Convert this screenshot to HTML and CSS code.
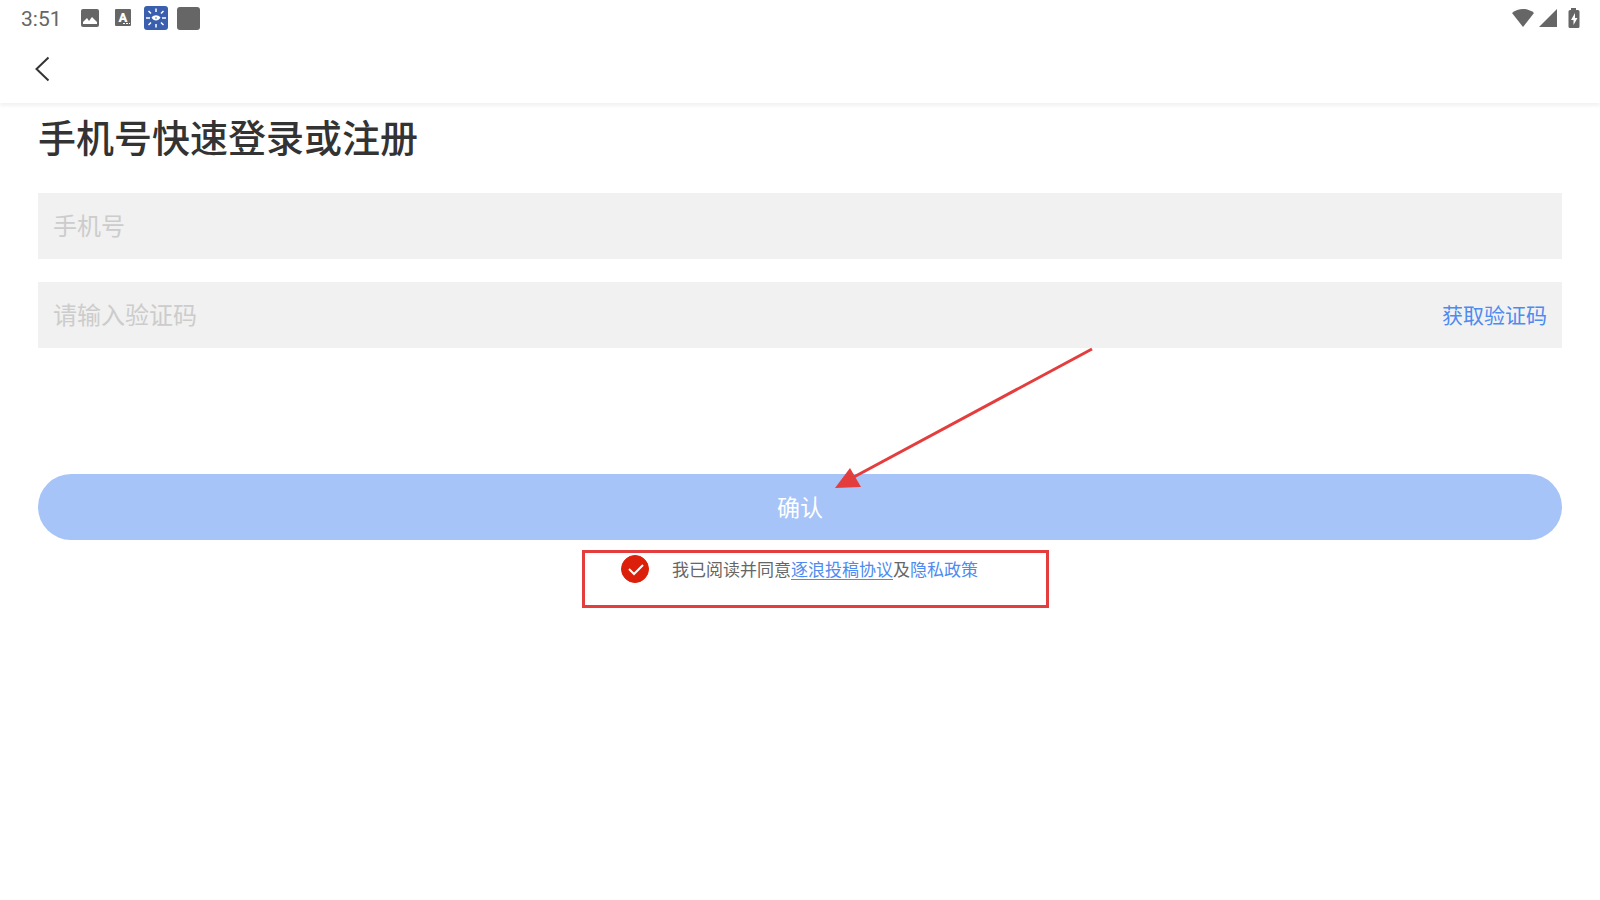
FILE: index.html
```html
<!DOCTYPE html>
<html lang="zh-CN">
<head>
    <meta charset="UTF-8">
    <meta name="viewport" content="width=device-width, initial-scale=1.0">
    <title>手机号快速登录或注册</title>
    <link rel="stylesheet" href="styles.css">
</head>
<body>

<div class="status-bar">
    <div class="status-left">
        <span class="clock">3:51</span>
        <svg class="status-icon" viewBox="0 0 24 24">
            <rect x="3" y="3" width="18" height="18" rx="2" fill="#666"/>
            <path d="M5 18v-2l4-4 2 3 3-4 5 5v2z" fill="#fff"/>
        </svg>
        <svg class="status-icon" viewBox="0 0 24 24">
            <rect x="4" y="3" width="16" height="17" rx="1" fill="#666"/>
            <text x="12" y="16" class="icon-letter">A</text>
            <path d="M12 17h2v1h-2zM15 17h2v1h-2zM18 17h1v1h-1z" fill="#fff"/>
        </svg>
        <svg class="status-icon" viewBox="0 0 24 24">
            <rect width="24" height="24" rx="3" fill="#3a5fae"/>
            <path d="M12 2.5V6M12 18v3.500M2 12h4M18 12h4M4.500 5L7 7.500M17 16.500l2.500 2.500M4.500 19L7 16.500M17 7.500L19.500 5" stroke="#fff" stroke-width="1.5"/>
            <path d="M7.500 11.500c2.500-3 6.500-3 9 0-2 4-7 4-9 0z" fill="#fff"/>
            <circle cx="12" cy="12" r="1" fill="#8fa6d4"/>
        </svg>
        <span class="app-block"></span>
    </div>
    <div class="status-right">
        <svg width="24" height="20" viewBox="0 0 24 20">
            <path d="M1 5C7.500-.3 16.500-.3 23 5L12 19z" fill="#666"/>
        </svg>
        <svg width="20" height="20" viewBox="0 0 20 20">
            <path d="M19 1v18H1z" fill="#666"/>
        </svg>
        <svg class="battery" width="12" height="20" viewBox="0 0 12 20">
            <path d="M3 0h5v2h2q1.500 0 1.500 1.500v15q0 1.500-1.500 1.500H2q-1.500 0-1.500-1.500v-15Q.5 2 2 2h1z" fill="#666"/>
            <path d="M7 5l-4 7h2.500v5L9.500 10H7z" fill="#fff"/>
        </svg>
    </div>
</div>

<header class="nav-bar">
    <button type="button" class="back" aria-label="返回">
        <svg width="16" height="26" viewBox="0 0 16 26">
            <path d="M14.500 1.500L2.500 13l12 11.500" fill="none" stroke="#333" stroke-width="2"/>
        </svg>
    </button>
</header>

<main class="container">
    <h1>手机号快速登录或注册</h1>
    <form id="login-form">
        <div class="form-group">
            <input type="tel" id="phone" name="phone" placeholder="手机号" aria-label="手机号">
        </div>
        <div class="form-group">
            <input type="text" id="code" name="code" placeholder="请输入验证码" aria-label="请输入验证码">
            <button type="button" class="get-code">获取验证码</button>
        </div>
        <div class="confirm">
            <button type="submit" class="submit">确认</button>
            <svg class="arrow" width="260" height="142" viewBox="0 0 260 142">
                <path d="M258 2L18 131" stroke="#e43d3d" stroke-width="3"/>
                <path d="M1 141l15-20 11 19z" fill="#e43d3d"/>
            </svg>
        </div>
        <div class="agreement">
            <input type="checkbox" id="agree" name="agree" checked>
            <p><label for="agree">我已阅读并同意</label><a href="#" class="underlined">逐浪投稿协议</a>及<a href="#">隐私政策</a></p>
            <span class="highlight"></span>
        </div>
    </form>
</main>

</body>
</html>
```

FILE: styles.css
```css
* {
    box-sizing: border-box;
}
body {
    font-family: Roboto, 'Noto Sans CJK SC', sans-serif;
    background: #fff;
    color: #333;
    margin: 0;
    min-height: 100vh;
}
button {
    background: none;
    border: none;
    padding: 0;
    font-family: inherit;
    cursor: pointer;
}
svg {
    display: block;
}

/* Status bar */
.status-bar {
    display: flex;
    justify-content: space-between;
    align-items: center;
    height: 36px;
    padding: 0 20px 0 21px;
}
.status-left,
.status-right {
    display: flex;
    align-items: center;
}
.status-left {
    gap: 9px;
}
.clock {
    color: #666;
    font-size: 21px;
    line-height: 24px;
    padding-top: 2px;
    margin-right: 7px;
}
.status-icon {
    width: 24px;
    height: 24px;
}
.icon-letter {
    font-size: 13px;
    font-weight: 900;
    fill: #fff;
    text-anchor: middle;
}
.app-block {
    width: 23px;
    height: 23px;
    border-radius: 3px;
    background: #666;
}
.status-right {
    gap: 3px;
}
.battery {
    margin-left: 7px;
}

/* Header */
.nav-bar {
    display: flex;
    align-items: center;
    height: 67px;
    padding: 0 34px 2px;
    box-shadow: 0 3px 3px rgba(0, 0, 0, 0.05);
}

/* Login form */
.container {
    padding: 8px 38px;
}
h1 {
    margin: 0 0 26px;
    font-size: 38px;
    font-weight: 500;
    line-height: 56px;
}
.form-group {
    display: flex;
    align-items: center;
    height: 66px;
    margin-bottom: 23px;
    padding: 0 15px;
    background: #f1f1f1;
}
.form-group input {
    flex: 1;
    min-width: 0;
    height: 100%;
    padding: 2px 0 0;
    border: none;
    outline: none;
    background: transparent;
    color: #333;
    font-family: inherit;
    font-size: 24px;
}
.form-group input::placeholder {
    color: #ccc;
}
.get-code {
    padding-bottom: 2px;
    color: #4d8bf0;
    font-size: 21px;
}
.confirm {
    position: relative;
    margin-top: 126px;
}
.submit {
    display: block;
    width: 100%;
    height: 66px;
    padding-bottom: 2px;
    border-radius: 33px;
    background: #a6c4f7;
    color: #fff;
    font-size: 23px;
}
.arrow {
    position: absolute;
    left: calc(50% + 34px);
    bottom: 51px;
    pointer-events: none;
}
.agreement {
    position: relative;
    display: flex;
    justify-content: center;
    align-items: center;
    gap: 23px;
    margin-top: 15px;
    padding-right: 1px;
    color: #666;
    font-size: 17px;
    line-height: 26px;
}
.agreement p {
    margin: 0;
    padding-top: 2px;
}
.agreement a {
    color: #4d8bf0;
    text-decoration: none;
}
.agreement .underlined {
    text-decoration: underline;
    text-underline-offset: 3px;
}
.agreement input {
    appearance: none;
    width: 28px;
    height: 28px;
    margin: 0;
    border: 1px solid #db1f0a;
    border-radius: 50%;
}
.agreement input:checked {
    background: #db1f0a url("data:image/svg+xml,%3Csvg xmlns='http://www.w3.org/2000/svg' viewBox='0 0 26 26'%3E%3Cpath d='M7 13l5 5 9-9' fill='none' stroke='white' stroke-width='2'/%3E%3C/svg%3E") center no-repeat;
}
.highlight {
    position: absolute;
    top: -5px;
    left: calc(50% - 218px);
    width: 467px;
    height: 58px;
    border: 3px solid #e43d3d;
    pointer-events: none;
}
```
